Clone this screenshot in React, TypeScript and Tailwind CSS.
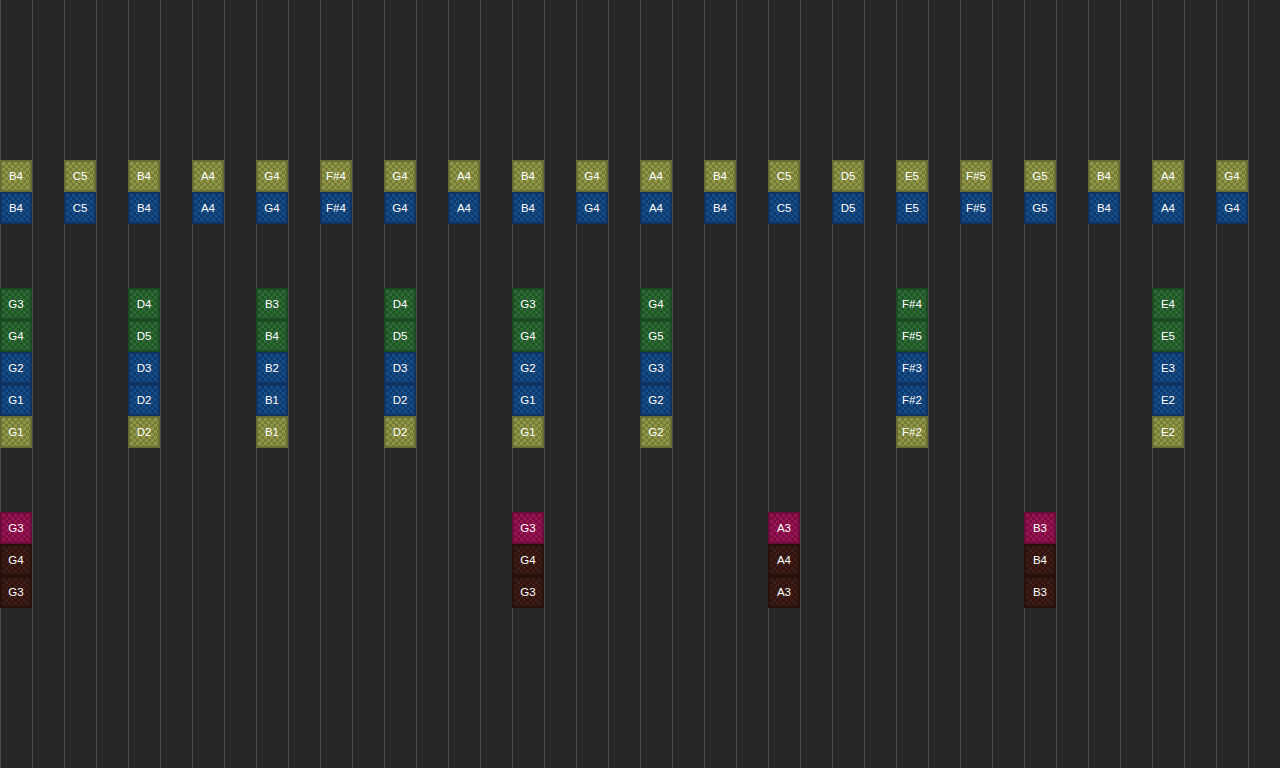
const melody = ["B4","","C5","","B4","","A4","","G4","","F#4","","G4","","A4","","B4","","G4","","A4","","B4","","C5","","D5","","E5","","F#5","","G5","","B4","","A4","","G4",""];
const spaced = (vals: string[], at: number[]) => { const r = Array(40).fill(""); at.forEach((c, i) => { r[c] = vals[i]; }); return r as string[]; };
const chordCols = [0,4,8,12,16,20,28,36];
const bassCols = [0,16,24,32];
type Kind = "y"|"b"|"g"|"m"|"r";
const rows: Record<number,[Kind,string[]]> = {
  5:["y",melody],
  6:["b",melody],
  9:["g",spaced(["G3","D4","B3","D4","G3","G4","F#4","E4"],chordCols)],
  10:["g",spaced(["G4","D5","B4","D5","G4","G5","F#5","E5"],chordCols)],
  11:["b",spaced(["G2","D3","B2","D3","G2","G3","F#3","E3"],chordCols)],
  12:["b",spaced(["G1","D2","B1","D2","G1","G2","F#2","E2"],chordCols)],
  13:["y",spaced(["G1","D2","B1","D2","G1","G2","F#2","E2"],chordCols)],
  16:["m",spaced(["G3","G3","A3","B3"],bassCols)],
  17:["r",spaced(["G4","G4","A4","B4"],bassCols)],
  18:["r",spaced(["G3","G3","A3","B3"],bassCols)],
};
const styles: Record<Kind,string> = {
  y:"border-[#686d33] bg-[conic-gradient(#767c37_25%,#8f9745_0_50%,#767c37_0_75%,#8f9745_0)]",
  b:"border-[#0e3360] bg-[conic-gradient(#0f3a6d_25%,#164c88_0_50%,#0f3a6d_0_75%,#164c88_0)]",
  g:"border-[#1c4a24] bg-[conic-gradient(#215429_25%,#2b6b33_0_50%,#215429_0_75%,#2b6b33_0)]",
  m:"border-[#6c0a38] bg-[conic-gradient(#7a0c41_25%,#9a1352_0_50%,#7a0c41_0_75%,#9a1352_0)]",
  r:"border-[#27110c] bg-[conic-gradient(#2d140e_25%,#3f1d16_0_50%,#2d140e_0_75%,#3f1d16_0)]",
};
const Note = ({ kind, label }: { kind: Kind; label: string }) => (
  <div className={`w-8 h-8 shrink-0 border-2 bg-[length:6px_6px] flex items-center justify-center pt-0.5 text-white text-[11.5px] leading-none ${styles[kind]}`}>{label}</div>
);
export default function App() {
  return (
    <div className="w-[1280px] h-[768px] overflow-hidden bg-[conic-gradient(#262626_25%,#282828_0_50%,#262626_0_75%,#282828_0)] bg-[length:2px_2px] font-['Liberation_Sans',Arial,sans-serif]">
      {Array.from({ length: 24 }, (_, r) => (
        <div key={r} className="flex h-8">
          {Array.from({ length: 40 }, (_, c) => {
            const row = rows[r];
            const label = row ? row[1][c] : "";
            return label ? <Note key={c} kind={row[0]} label={label} /> : <div key={c} className="w-8 h-8 shrink-0 border-l border-[#4a4a4a]" />;
          })}
        </div>
      ))}
    </div>
  );
}
